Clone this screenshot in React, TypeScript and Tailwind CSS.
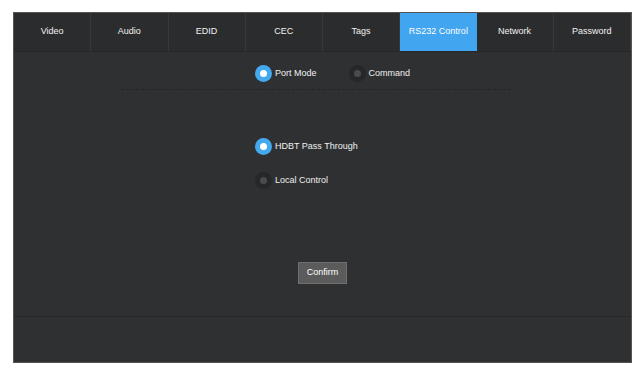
import React from "react";

const tabs = ["Video", "Audio", "EDID", "CEC", "Tags", "RS232 Control", "Network", "Password"];

function Radio({ on, label }: { on: boolean; label: string }) {
  return (
    <div className="flex items-center gap-[3px]">
      {on ? (
        <span className="w-[17px] h-[17px] rounded-full bg-[#45a9f0] flex items-center justify-center">
          <span className="w-[7px] h-[7px] rounded-full bg-white" />
        </span>
      ) : (
        <span className="w-[17px] h-[17px] rounded-full bg-[#262729] flex items-center justify-center">
          <span className="w-[7px] h-[7px] rounded-full bg-[#4a4b4d]" />
        </span>
      )}
      <span className="text-[9px] text-[#f0f0f0]">{label}</span>
    </div>
  );
}

export default function App() {
  return (
    <div className="w-[640px] h-[370px] bg-white pt-[12px] pl-[13px]" style={{ fontFamily: '"Liberation Sans", Arial, sans-serif' }}>
      <div className="w-[619px] h-[351px] bg-[#2f3032] border border-[#555] flex flex-col">
        <div className="flex h-[39px] bg-[#2b2c2e] border-b border-[#262729]">
          {tabs.map((t) => (
            <div
              key={t}
              className={
                t === "RS232 Control"
                  ? "flex-1 flex items-center justify-center text-[9px] text-white bg-[#41a5ef]"
                  : "flex-1 flex items-center justify-center text-[9px] text-[#f2f2f2] border-r border-[#38393b]"
              }
            >
              {t}
            </div>
          ))}
        </div>
        <div className="flex-1 flex flex-col">
          <div className="flex pt-[13px] pl-[241px] gap-[32px]">
            <Radio on label="Port Mode" />
            <Radio on={false} label="Command" />
          </div>
          <div className="mt-[7px] ml-[107px] w-[390px] border-t border-dashed border-[#262626]" />
          <div className="flex flex-col pl-[241px] pt-[48px] gap-[17px]">
            <Radio on label="HDBT Pass Through" />
            <Radio on={false} label="Local Control" />
          </div>
          <div className="flex justify-center mt-[73px]">
            <button className="w-[49px] h-[22px] bg-[#5b5b5c] border border-[#707070] text-[9px] text-white">Confirm</button>
          </div>
        </div>
        <div className="h-[46px] border-t border-[#262729] bg-[#2f3032]" />
      </div>
    </div>
  );
}
